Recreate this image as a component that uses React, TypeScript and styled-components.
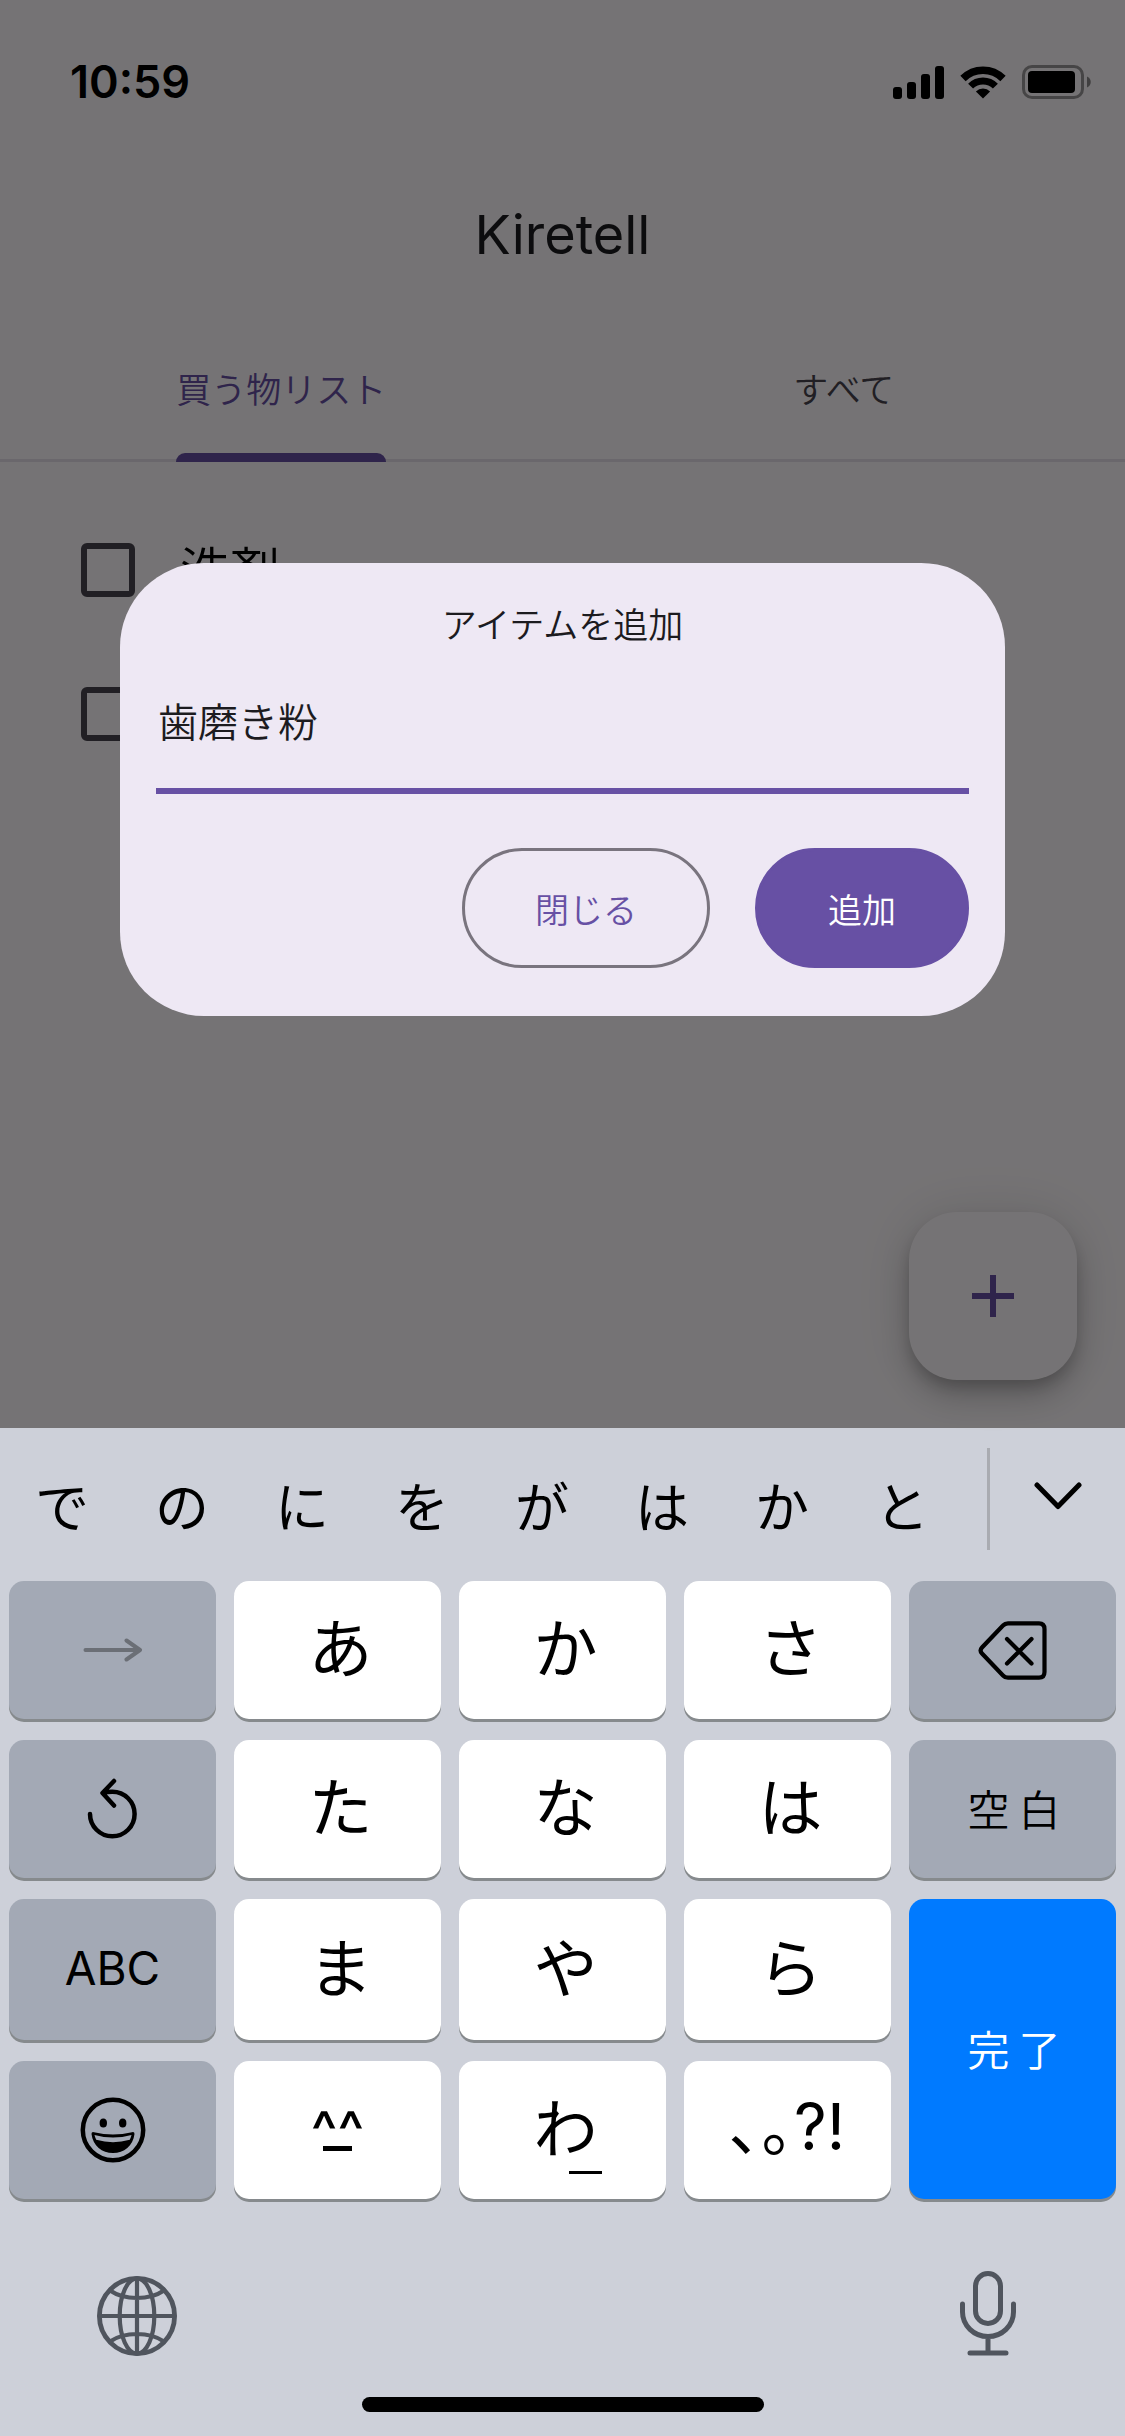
import React, { useState } from "react";
import styled, { createGlobalStyle, css } from "styled-components";

const color = {
  surface: "#fffbfe",
  primary: "#6750a4",
  onSurface: "#1c1b1f",
  onSurfaceVariant: "#49454f",
  outline: "#79747e",
  dialog: "#eee8f4",
  keyboard: "#cdd0d9",
  modifier: "#a3a9b5",
  keyShadow: "#868a8d",
  accent: "#007aff",
  tool: "#50555e",
};

const latin = `Inter, "Noto Sans CJK JP", sans-serif`;
const japanese = `"Noto Sans CJK JP", Inter, sans-serif`;

const GlobalStyle = createGlobalStyle`
  *, *::before, *::after { box-sizing: border-box; }
  body { margin: 0; background: ${color.keyboard}; }
  button, input { font: inherit; color: inherit; margin: 0; padding: 0; border: 0; background: none; }
  svg { display: block; fill: none; stroke: currentColor; stroke-linecap: round; stroke-linejoin: round; }
`;

const Screen = styled.div`
  display: flex;
  flex-direction: column;
  min-height: 100vh;
  font-family: ${japanese};
  font-weight: 350;
  color: #000;
`;

const AppArea = styled.main`
  position: relative;
  flex: 1;
  background: ${color.surface};
`;

/* status bar and header */

const StatusBar = styled.div`
  display: flex;
  align-items: center;
  justify-content: space-between;
  height: 164px;
  padding: 0 34px 0 70px;
`;

const Clock = styled.span`
  font: 600 45px/54px ${latin};
`;

const StatusIcons = styled.div`
  display: flex;
  align-items: center;
  gap: 16px;
`;

const AppBar = styled.header`
  display: flex;
  align-items: center;
  justify-content: center;
  height: 154px;
  padding-bottom: 12px;
`;

const AppTitle = styled.h1`
  margin: 0;
  font: 400 54px/66px ${latin};
  color: ${color.onSurface};
`;

const Tabs = styled.div`
  display: grid;
  grid-template-columns: 1fr 1fr;
  height: 144px;
  box-shadow: inset 0 -3px #e7e0ec;
`;

const Tab = styled.button`
  display: flex;
  justify-content: center;
`;

const TabLabel = styled.span<{ $active: boolean }>`
  position: relative;
  display: flex;
  align-items: center;
  height: 100%;
  padding-bottom: 6px;
  font-size: 35px;
  color: ${(p) => (p.$active ? color.primary : color.onSurfaceVariant)};
  ${(p) =>
    p.$active &&
    css`
      &::after {
        content: "";
        position: absolute;
        inset: auto 0 0;
        height: 9px;
        border-radius: 9px 9px 0 0;
        background: ${color.primary};
      }
    `}
`;

/* shopping list */

const List = styled.ul`
  list-style: none;
  margin: 0;
  padding: 36px 81px 0;
`;

const ListRow = styled.li`
  height: 144px;
`;

const RowLabel = styled.label`
  display: flex;
  align-items: center;
  gap: 45px;
  height: 100%;
  font-size: 50px;
`;

const RowText = styled.span`
  padding-bottom: 6px;
`;

const Checkbox = styled.input`
  appearance: none;
  width: 54px;
  height: 54px;
  border: 6px solid ${color.onSurfaceVariant};
  border-radius: 6px;
`;

const Fab = styled.button`
  position: absolute;
  right: 48px;
  bottom: 48px;
  display: grid;
  place-items: center;
  width: 168px;
  height: 168px;
  border-radius: 48px;
  background: ${color.surface};
  color: ${color.primary};
  box-shadow: 0 9px 15px -3px rgba(0, 0, 0, 0.2), 0 18px 30px rgba(0, 0, 0, 0.14),
    0 3px 54px rgba(0, 0, 0, 0.12);
`;

/* dialog */

const Scrim = styled.div`
  position: absolute;
  inset: 0;
  display: flex;
  align-items: center;
  padding: 150px 120px 0;
  overflow: hidden;
  background: rgba(0, 0, 0, 0.54);
`;

const Dialog = styled.form`
  display: flex;
  flex-direction: column;
  flex: 1;
  padding: 33px 36px 48px;
  border-radius: 84px;
  background: ${color.dialog};
  color: ${color.onSurface};
`;

const DialogTitle = styled.label`
  font-size: 35px;
  line-height: 54px;
  text-align: center;
`;

const ItemInput = styled.input`
  height: 144px;
  width: 100%;
  padding: 3px 2px 0;
  border-bottom: 6px solid ${color.primary};
  border-radius: 0;
  outline: none;
  font-size: 40px;
`;

const Actions = styled.div`
  display: flex;
  justify-content: flex-end;
  gap: 45px;
  margin-top: 54px;
`;

const ActionButton = styled.button<{ $filled?: boolean }>`
  height: 120px;
  padding: 2px 70px 0;
  border: 3px solid ${(p) => (p.$filled ? color.primary : color.outline)};
  border-radius: 60px;
  background: ${(p) => (p.$filled ? color.primary : "transparent")};
  color: ${(p) => (p.$filled ? "#fff" : color.primary)};
  font-size: 34px;
`;

/* keyboard */

const Keyboard = styled.section`
  display: flex;
  flex-direction: column;
  padding-bottom: 24px;
  background: ${color.keyboard};
  font-weight: 400;
`;

const CandidateBar = styled.div`
  display: flex;
  align-items: center;
  height: 141px;
  margin-bottom: 12px;
`;

const Candidates = styled.div`
  display: grid;
  grid-template-columns: repeat(8, 1fr);
  flex: 1;
  padding: 12px 25px 0 2px;
`;

const Candidate = styled.button`
  font-size: 54px;
  line-height: 78px;
`;

const ExpandButton = styled.button`
  display: grid;
  place-items: center;
  width: 138px;
  height: 102px;
  border-left: 3px solid #a9abb1;
  padding-bottom: 6px;
`;

const Keys = styled.div`
  display: grid;
  grid-template-columns: repeat(5, 1fr);
  grid-template-rows: 138px 138px 141px 138px;
  gap: 21px 18px;
  padding: 0 9px;
`;

type KeyTone = "letter" | "modifier" | "accent";

const toneFill: Record<KeyTone, string> = {
  letter: "#fff",
  modifier: color.modifier,
  accent: color.accent,
};

const Key = styled.button<{ $tone: KeyTone; $tall?: boolean }>`
  display: flex;
  align-items: center;
  justify-content: center;
  grid-row: span ${(p) => (p.$tall ? 2 : 1)};
  border-radius: 15px;
  background: ${(p) => toneFill[p.$tone]};
  box-shadow: 0 3px ${color.keyShadow};
  color: ${(p) => (p.$tone === "accent" ? "#fff" : "#000")};
  line-height: 1;
`;

const Kana = styled.span`
  position: relative;
  padding: 0 0 12px 6px;
  font-size: 64px;
`;

const WordLabel = styled.span`
  display: flex;
  gap: 9px;
  padding: 0 0 3px 3px;
  font-size: 42px;
  font-weight: 350;
`;

const LatinLabel = styled.span`
  padding-bottom: 3px;
  font: 400 46px/54px ${latin};
`;

const Punctuation = styled.span`
  padding-bottom: 6px;
  font: 400 64px/64px ${latin};
`;

const FaceLabel = styled.span`
  display: flex;
  flex-direction: column;
  align-items: center;
  padding-top: 6px;
  font: 500 56px/30px ${latin};
  &::after {
    content: "";
    width: 29px;
    height: 5px;
    background: #000;
  }
`;

const LongVowelMark = styled.span`
  position: absolute;
  right: -4px;
  bottom: -6px;
  width: 33px;
  height: 3px;
  background: #000;
`;

const ToolRow = styled.div`
  display: flex;
  align-items: center;
  justify-content: space-between;
  height: 198px;
  padding: 36px 109px 0 97px;
  color: ${color.tool};
`;

const HomeIndicator = styled.div`
  align-self: center;
  width: 402px;
  height: 15px;
  border-radius: 8px;
  background: #000;
`;

/* icons */

const SignalIcon = () => (
  <svg width="51" height="33" viewBox="0 0 51 33">
    <g fill="#000" stroke="none">
      <rect x="0" y="21" width="9" height="12" rx="3" />
      <rect x="14" y="16" width="9" height="17" rx="3" />
      <rect x="28" y="8" width="9" height="25" rx="3" />
      <rect x="42" y="0" width="9" height="33" rx="3" />
    </g>
  </svg>
);

const WifiIcon = () => (
  <svg width="46" height="33" viewBox="0 0 46 33">
    <path d="M3 12.5A28.25 28.25 0 0 1 43 12.5" strokeWidth="7.5" strokeLinecap="butt" />
    <path d="M10.6 20.1A17.5 17.5 0 0 1 35.4 20.1" strokeWidth="7" strokeLinecap="butt" />
    <path d="M23 32.5L15.9 25.4A10 10 0 0 1 30.1 25.4Z" fill="#000" stroke="none" />
  </svg>
);

const BatteryIcon = () => (
  <svg width="69" height="34" viewBox="0 0 69 34">
    <rect x="1.5" y="1.5" width="59" height="31" rx="8.5" strokeWidth="3" stroke="#000" strokeOpacity="0.4" />
    <rect x="6" y="6" width="47" height="22" rx="4" fill="#000" stroke="none" />
    <path d="M65 11.5C70 13.5 70 20.5 65 22.5Z" fill="#000" fillOpacity="0.45" stroke="none" />
  </svg>
);

const PlusIcon = () => (
  <svg width="42" height="42" viewBox="0 0 42 42" strokeWidth="6">
    <path d="M21 0V42M0 21H42" />
  </svg>
);

const ChevronIcon = () => (
  <svg width="48" height="28" viewBox="0 0 48 28" strokeWidth="5">
    <path d="M3 3L24 24.5L45 3" />
  </svg>
);

const ArrowIcon = () => (
  <svg width="60" height="24" viewBox="0 0 60 24" strokeWidth="4">
    <path stroke="#6b6f76" d="M2.5 12H57M43.5 2.5L57 12L43.5 21.5" />
  </svg>
);

const UndoIcon = () => (
  <svg width="53" height="64" viewBox="0 0 53 64" strokeWidth="4.5">
    <path d="M4 37A22.3 22.3 0 1 0 26.3 14.7Q21 14.7 17 16M28 4L16.5 16L28 28.5" />
  </svg>
);

const BackspaceIcon = () => (
  <svg width="69" height="59" viewBox="0 0 69 59" strokeWidth="4.2">
    <path d="M30 2.3H61Q66.5 2.3 66.5 8V51Q66.5 56.7 61 56.7H30Q27 56.7 25 54.5L4 32.5Q1.2 29.5 4 26.5L25 4.5Q27 2.3 30 2.3Z" />
    <path d="M29 18L53.5 42.5M53.5 18L29 42.5" />
  </svg>
);

const SmileIcon = () => (
  <svg width="66" height="66" viewBox="0 0 66 66" strokeWidth="4.5">
    <circle cx="33" cy="33" r="30.2" />
    <g fill="#000" stroke="none">
      <ellipse cx="23.3" cy="26" rx="3.7" ry="4.5" />
      <ellipse cx="42.7" cy="26" rx="3.7" ry="4.5" />
      <path d="M11.5 37Q11.5 34.5 14 35.2Q33 40 52 35.2Q54.5 34.5 54.5 37C53 49 44 56 33 56C22 56 13 49 11.5 37Z" />
      <path fill={color.modifier} d="M14.5 38Q33 43 51.5 38Q51 40.5 49.8 42.8Q33 47.5 16.2 42.8Q15 40.5 14.5 38Z" />
    </g>
  </svg>
);

const GlobeIcon = () => (
  <svg width="80" height="80" viewBox="0 0 80 80" strokeWidth="4.2">
    <circle cx="40" cy="40" r="37.6" strokeWidth="4.8" />
    <ellipse cx="40" cy="40" rx="17.3" ry="37.6" />
    <path d="M40 3V77M3 40H77M13 14.5Q24 22 40 22T67 14.5M13 65.5Q24 58 40 58T67 65.5" />
  </svg>
);

const MicIcon = () => (
  <svg width="56" height="91" viewBox="0 0 56 91" strokeWidth="5">
    <rect x="15.5" y="2.5" width="25" height="50" rx="12.5" />
    <path d="M2.5 33V41A25.5 24.5 0 0 0 53.5 41V33M28 66V82M10 82H46" />
  </svg>
);

interface KeySpec {
  name: string;
  tone: KeyTone;
  tall?: boolean;
  content?: React.ReactNode;
}

const keys: KeySpec[] = [
  { name: "次候補", tone: "modifier", content: <ArrowIcon /> },
  { name: "あ", tone: "letter" },
  { name: "か", tone: "letter" },
  { name: "さ", tone: "letter" },
  { name: "削除", tone: "modifier", content: <BackspaceIcon /> },
  { name: "戻る", tone: "modifier", content: <UndoIcon /> },
  { name: "た", tone: "letter" },
  { name: "な", tone: "letter" },
  { name: "は", tone: "letter" },
  { name: "空白", tone: "modifier", content: <WordLabel><span>空</span><span>白</span></WordLabel> },
  { name: "ABC", tone: "modifier", content: <LatinLabel>ABC</LatinLabel> },
  { name: "ま", tone: "letter" },
  { name: "や", tone: "letter" },
  { name: "ら", tone: "letter" },
  { name: "完了", tone: "accent", tall: true, content: <WordLabel><span>完</span><span>了</span></WordLabel> },
  { name: "絵文字", tone: "modifier", content: <SmileIcon /> },
  { name: "顔文字", tone: "letter", content: <FaceLabel>^^</FaceLabel> },
  { name: "わ", tone: "letter", content: <Kana>わ<LongVowelMark /></Kana> },
  { name: "句読点", tone: "letter", content: <Punctuation>､｡?!</Punctuation> },
];

const tabs = ["買う物リスト", "すべて"];
const items = ["洗剤", ""];
const candidates = ["で", "の", "に", "を", "が", "は", "か", "と"];

export default function App() {
  const [draft, setDraft] = useState("歯磨き粉");
  const [activeTab, setActiveTab] = useState(0);

  return (
    <Screen lang="ja">
      <GlobalStyle />
      <AppArea>
        <StatusBar>
          <Clock>10:59</Clock>
          <StatusIcons>
            <SignalIcon />
            <WifiIcon />
            <BatteryIcon />
          </StatusIcons>
        </StatusBar>
        <AppBar>
          <AppTitle>Kiretell</AppTitle>
        </AppBar>
        <Tabs role="tablist">
          {tabs.map((tab, i) => (
            <Tab key={tab} role="tab" aria-selected={i === activeTab} onClick={() => setActiveTab(i)}>
              <TabLabel $active={i === activeTab}>{tab}</TabLabel>
            </Tab>
          ))}
        </Tabs>
        <List>
          {items.map((item, i) => (
            <ListRow key={i}>
              <RowLabel>
                <Checkbox type="checkbox" aria-label={item || "アイテム"} />
                <RowText>{item}</RowText>
              </RowLabel>
            </ListRow>
          ))}
        </List>
        <Fab aria-label="追加">
          <PlusIcon />
        </Fab>
        <Scrim>
          <Dialog role="dialog" onSubmit={(e) => e.preventDefault()}>
            <DialogTitle htmlFor="item-name">アイテムを追加</DialogTitle>
            <ItemInput id="item-name" value={draft} onChange={(e) => setDraft(e.target.value)} />
            <Actions>
              <ActionButton type="button">閉じる</ActionButton>
              <ActionButton type="submit" $filled>
                追加
              </ActionButton>
            </Actions>
          </Dialog>
        </Scrim>
      </AppArea>
      <Keyboard>
        <CandidateBar>
          <Candidates>
            {candidates.map((c) => (
              <Candidate key={c}>{c}</Candidate>
            ))}
          </Candidates>
          <ExpandButton aria-label="候補を開く">
            <ChevronIcon />
          </ExpandButton>
        </CandidateBar>
        <Keys>
          {keys.map((k) => (
            <Key key={k.name} $tone={k.tone} $tall={k.tall} aria-label={k.name}>
              {k.content ?? <Kana>{k.name}</Kana>}
            </Key>
          ))}
        </Keys>
        <ToolRow>
          <button aria-label="キーボード切替">
            <GlobeIcon />
          </button>
          <button aria-label="音声入力">
            <MicIcon />
          </button>
        </ToolRow>
        <HomeIndicator />
      </Keyboard>
    </Screen>
  );
}
